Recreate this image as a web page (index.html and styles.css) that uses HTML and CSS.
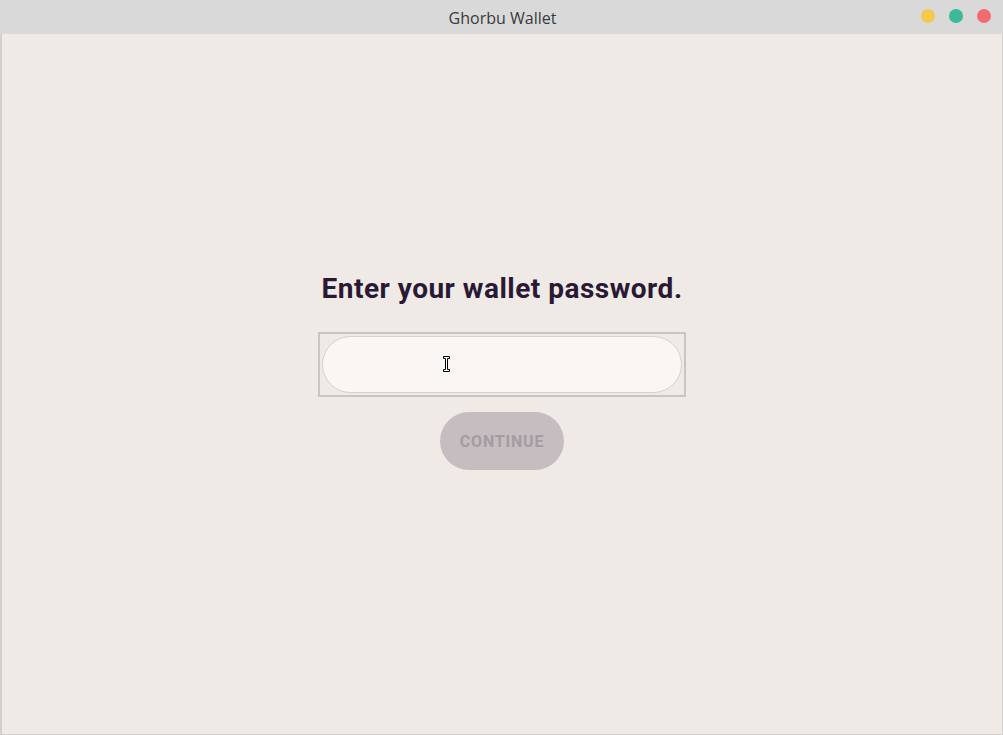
FILE: index.html
```html
<!DOCTYPE html>
<html lang="en">
<head>
<meta charset="utf-8">
<title>Ghorbu Wallet</title>
<link rel="stylesheet" href="styles.css">
</head>
<body>
<div class="window">
  <header class="titlebar">
    <span class="title">Ghorbu Wallet</span>
    <div class="controls">
      <span class="dot dot-min"></span>
      <span class="dot dot-max"></span>
      <span class="dot dot-close"></span>
    </div>
  </header>
  <main class="content">
    <h1 class="heading">Enter your wallet password.</h1>
    <div class="field-focus">
      <div class="field">
        <input class="password" type="password" aria-label="Wallet password">
        <svg class="cursor" width="7" height="16" viewBox="0 0 7 16" aria-hidden="true">
          <path d="M0.5 0.5h6v2h-2v11h2v2h-6v-2h2v-11h-2z" fill="#fff" stroke="#000" stroke-width="1"/>
        </svg>
      </div>
    </div>
    <button class="continue" type="button" disabled>CONTINUE</button>
  </main>
</div>
</body>
</html>
```
FILE: styles.css
```css
* { box-sizing: border-box; }
html, body { margin: 0; padding: 0; }
body {
  width: 1003px;
  height: 735px;
  overflow: hidden;
  background: #d8d8d8;
}
.window {
  width: 1003px;
  height: 735px;
  display: flex;
  flex-direction: column;
}
.titlebar {
  height: 34px;
  flex: none;
  background: #d9d9d9;
  position: relative;
  display: flex;
  align-items: center;
  justify-content: center;
}
.title {
  font-family: "Open Sans", "DejaVu Sans", sans-serif;
  font-size: 16px;
  font-weight: 500;
  color: #3a3a3a;
  margin-left: 2px;
  margin-top: 2px;
}
.controls {
  position: absolute;
  right: 12px;
  top: 9px;
  display: flex;
  gap: 14px;
}
.dot {
  width: 14px;
  height: 14px;
  border-radius: 50%;
  display: block;
}
.dot-min { background: #f7c748; }
.dot-max { background: #3cb89b; }
.dot-close { background: #f26b6f; }
.content {
  flex: 1;
  background: #efeae6;
  border-left: 2px solid #d2d0ce;
  border-right: 1px solid #d2d0ce;
  border-bottom: 1px solid #d2d0ce;
  display: flex;
  flex-direction: column;
  align-items: center;
  padding-top: 238px;
}
.heading {
  margin: 0;
  font-family: Roboto, "Liberation Sans", sans-serif;
  font-size: 28px;
  line-height: 33px;
  font-weight: 700;
  letter-spacing: 0.5px;
  color: #2a1935;
}
.field-focus {
  margin-top: 27px;
  border: 2px solid #cbc4c5;
  padding: 2px;
  width: 368px;
  height: 65px;
}
.field {
  position: relative;
  width: 360px;
  height: 57px;
}
.password {
  display: block;
  width: 100%;
  height: 100%;
  border: 1px solid #d6d0d1;
  border-radius: 29px;
  background: #faf6f3;
  outline: none;
  padding: 0 24px;
  font-family: Roboto, sans-serif;
  font-size: 16px;
}
.cursor {
  position: absolute;
  left: 121px;
  top: 20px;
}
.continue {
  margin-top: 15px;
  width: 124px;
  height: 58px;
  border: none;
  border-radius: 29px;
  background: #c5bdc0;
  color: #a59ba2;
  font-family: Roboto, "Liberation Sans", sans-serif;
  font-size: 16px;
  font-weight: 700;
  letter-spacing: 0.8px;
  padding: 0;
}
```
